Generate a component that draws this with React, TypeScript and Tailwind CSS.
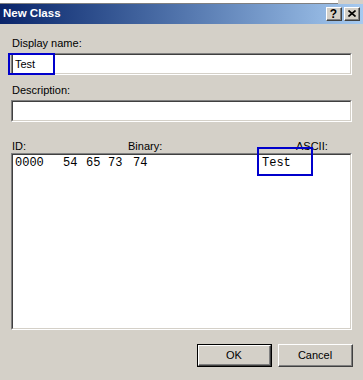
const Raised = ({
  children,
  className = "",
}: {
  children?: React.ReactNode;
  className?: string;
}) => (
  <div
    className={`border-t border-l border-t-white border-l-white border-b border-r border-b-[#404040] border-r-[#404040] bg-[#d4d0c8] ${className}`}
  >
    <div className="w-full h-full border-b border-r border-b-[#808080] border-r-[#808080] flex items-center justify-center">
      {children}
    </div>
  </div>
);

const Sunken = ({
  children,
  className = "",
}: {
  children?: React.ReactNode;
  className?: string;
}) => (
  <div
    className={`border-t border-l border-t-[#808080] border-l-[#808080] border-b border-r border-b-white border-r-white ${className}`}
  >
    <div className="w-full h-full bg-white border-t border-l border-t-[#404040] border-l-[#404040] border-b border-r border-b-[#d4d0c8] border-r-[#d4d0c8]">
      {children}
    </div>
  </div>
);

const Label = ({ text, className = "" }: { text: string; className?: string }) => (
  <div className={`h-[13px] leading-[13px] pl-[1px] ${className}`}>{text}</div>
);

export default function App() {
  return (
    <div
      className="w-[363px] h-[380px] bg-[#d4d0c8] text-[11px] text-black overflow-hidden"
      style={{ fontFamily: '"Liberation Sans", Arial, sans-serif' }}
    >
      {/* strip of window behind */}
      <div className="flex h-[4px]">
        <div className="w-[338px] bg-white border-b border-b-[#808080]" />
        <div className="flex-1 bg-[#d4d0c8]" />
      </div>

      {/* title bar */}
      <div className="h-[20px] flex items-center justify-between pl-[3px] pr-[3px] bg-gradient-to-r from-[#0a246a] to-[#a6caf0]">
        <span className="text-white font-bold text-[11.5px] leading-none">New Class</span>
        <div className="flex gap-[2px]">
          <Raised className="w-[16px] h-[14px]">
            <span className="font-bold text-[12px] leading-none text-black">?</span>
          </Raised>
          <Raised className="w-[16px] h-[14px]">
            <svg width="8" height="7" viewBox="0 0 8 7">
              <path d="M0.5 0.5 L7.5 6.5 M7.5 0.5 L0.5 6.5" stroke="#000" strokeWidth="1.6" />
            </svg>
          </Raised>
        </div>
      </div>

      {/* body */}
      <div className="px-[11px] pt-[13px]">
        <Label text="Display name:" className="mb-[3px]" />
        <div className="relative">
          <Sunken className="h-[22px]">
            <div className="pl-[2px] h-full flex items-center">Test</div>
          </Sunken>
          <div className="absolute left-[-3px] top-0 w-[47px] h-[22px] border-2 border-[#0000cc]" />
        </div>

        <Label text="Description:" className="mt-[9px] mb-[3px]" />
        <Sunken className="h-[22px]" />

        <div className="flex mt-[18px] h-[13px] leading-[13px]">
          <span className="w-[116px] pl-[1px]">ID:</span>
          <span className="w-[169px] pl-[1px]">Binary:</span>
          <span>ASCII:</span>
        </div>

        <div className="relative">
          <Sunken className="h-[177px]">
            <div
              className="flex pl-[2px] pt-[1px] text-[12px] leading-[14px]"
              style={{ fontFamily: '"Liberation Mono", "Courier New", monospace' }}
            >
              <span className="w-[48px]">0000</span>
              <span className="w-[23px]">54</span>
              <span className="w-[22px]">65</span>
              <span className="w-[25px]">73</span>
              <span className="w-[129px]">74</span>
              <span>Test</span>
            </div>
          </Sunken>
          <div className="absolute left-[246px] top-[-6px] w-[56px] h-[29px] border-2 border-[#0000cc]" />
        </div>
      </div>

      <div className="flex justify-end gap-[6px] pr-[10px] mt-[14px]">
        <div className="w-[75px] h-[23px] border border-black">
          <Raised className="w-full h-full">OK</Raised>
        </div>
        <Raised className="w-[75px] h-[23px]">Cancel</Raised>
      </div>
    </div>
  );
}
